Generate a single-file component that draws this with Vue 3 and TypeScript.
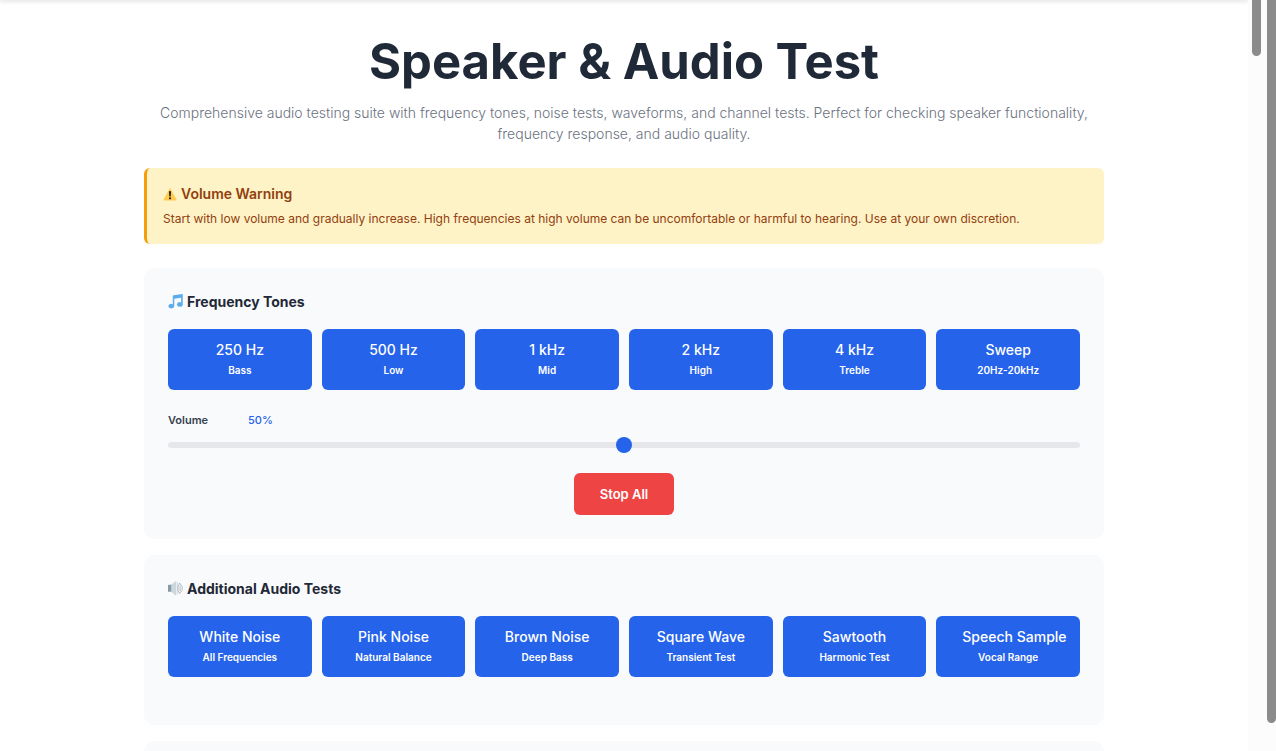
<script setup lang="ts">
import { ref } from 'vue'

interface AudioTest {
  name: string
  detail: string
}

const volume = ref(50)
const active = ref<string | null>(null)

const tones: AudioTest[] = [
  { name: '250 Hz', detail: 'Bass' },
  { name: '500 Hz', detail: 'Low' },
  { name: '1 kHz', detail: 'Mid' },
  { name: '2 kHz', detail: 'High' },
  { name: '4 kHz', detail: 'Treble' },
  { name: 'Sweep', detail: '20Hz-20kHz' },
]

const extras: AudioTest[] = [
  { name: 'White Noise', detail: 'All Frequencies' },
  { name: 'Pink Noise', detail: 'Natural Balance' },
  { name: 'Brown Noise', detail: 'Deep Bass' },
  { name: 'Square Wave', detail: 'Transient Test' },
  { name: 'Sawtooth', detail: 'Harmonic Test' },
  { name: 'Speech Sample', detail: 'Vocal Range' },
]
</script>

<template>
  <div class="shell">
    <div class="page">
      <header class="topbar"></header>
      <main class="content">
        <h1>Speaker &amp; Audio Test</h1>
        <p class="intro">
          Comprehensive audio testing suite with frequency tones, noise tests, waveforms, and channel tests. Perfect for checking speaker functionality, frequency response, and audio quality.
        </p>

        <section class="warning">
          <h2>
            <svg class="warn-icon" viewBox="0 0 26 26" aria-hidden="true">
              <path d="M13 2 L25 23 Q25 25 23 25 H3 Q1 25 1 23 Z" fill="#ffcc4d" />
              <path d="M11 8.500 Q13 6.500 15 8.500 L14.300 17.500 H11.700 Z" fill="#231f20" />
              <circle cx="13" cy="21" r="2" fill="#231f20" />
            </svg>
            <span>Volume Warning</span>
          </h2>
          <p>Start with low volume and gradually increase. High frequencies at high volume can be uncomfortable or harmful to hearing. Use at your own discretion.</p>
        </section>

        <section class="card">
          <h2>
            <svg class="icon" viewBox="0 0 36 36" aria-hidden="true">
              <path d="M34.200.100 L13.500 2.700 Q11.500 3 11.500 5 V24.300 A7 5.500 0 1 0 15 29 V11.300 L31.500 9.200 V20.300 A7 5.500 0 1 0 35.500 25 V1.500 Q35.500 0 34.200.100 Z" fill="#5dadec" />
            </svg>
            <span>Frequency Tones</span>
          </h2>
          <div class="grid">
            <button v-for="t in tones" :key="t.name" type="button" class="test" @click="active = t.name">
              <span class="name">{{ t.name }}</span>
              <span class="detail">{{ t.detail }}</span>
            </button>
          </div>
          <div class="volume">
            <div class="volume-head">
              <label for="volume">Volume</label>
              <output for="volume">{{ volume }}%</output>
            </div>
            <input id="volume" v-model.number="volume" type="range" min="0" max="100" />
          </div>
          <button type="button" class="stop" @click="active = null">Stop All</button>
        </section>

        <section class="card">
          <h2>
            <svg class="icon" viewBox="0 0 36 36" aria-hidden="true">
              <path d="M0 10 Q0 9 1 9 H9 V26 H1 Q0 26 0 25 Z" fill="#8899a6" />
              <path d="M8 9 L18 0.500 Q20 0 20 2 V33 Q20 35 18 34.500 L8 26 Z" fill="#ccd6dd" />
              <path d="M23 3 V32" stroke="#ccd6dd" stroke-width="2" fill="none" />
              <path d="M28 5 L34 13 V22 L28 30 L24 22 V13 Z M29 11 V24" stroke="#a3b1bb" stroke-width="2" fill="none" />
            </svg>
            <span>Additional Audio Tests</span>
          </h2>
          <div class="grid">
            <button v-for="t in extras" :key="t.name" type="button" class="test" @click="active = t.name">
              <span class="name">{{ t.name }}</span>
              <span class="detail">{{ t.detail }}</span>
            </button>
          </div>
        </section>

        <section class="card following"></section>
      </main>
    </div>
    <div class="rail inner" aria-hidden="true"><i></i></div>
    <div class="rail outer" aria-hidden="true"><i></i></div>
  </div>
</template>

<style>
body {
  margin: 0;
  background: #fff;
}
</style>

<style scoped>
* {
  box-sizing: border-box;
}

.shell {
  display: flex;
  height: 100vh;
  overflow: hidden;
  font-family: Inter, "Liberation Sans", sans-serif;
  color: #1f2937;
}

.page {
  flex: 1;
  min-width: 0;
  overflow: hidden;
}

.topbar {
  height: 0;
  box-shadow: 0 0 4px 1px rgba(0, 0, 0, 0.2);
}

.content {
  max-width: 1008px;
  margin: 0 auto;
  padding: 32px 24px 0;
}

h1 {
  margin: 0 0 10px;
  font-size: 49px;
  line-height: 60px;
  font-weight: 700;
  text-align: center;
}

.intro {
  margin: 0 0 24px;
  font-size: 14px;
  line-height: 21px;
  font-weight: 300;
  text-align: center;
  color: #6b7280;
}

h2 {
  display: flex;
  align-items: center;
  margin: 0;
  font-weight: 600;
}

.warning {
  height: 76px;
  margin-bottom: 24px;
  padding: 16px;
  border-left: 3px solid #f59e0b;
  border-radius: 6px;
  background: #fef3c7;
  color: #92400e;
}

.warning h2 {
  gap: 4px;
  margin-bottom: 7px;
  font-size: 14px;
  line-height: 19px;
}

.warning p {
  margin: 0;
  font-size: 12px;
  line-height: 18px;
}

.warn-icon {
  width: 14px;
  height: 14px;
}

.card {
  margin-bottom: 16px;
  padding: 24px;
  border-radius: 10px;
  background: #f9fafb;
}

.card h2 {
  gap: 4px;
  margin-bottom: 18px;
  font-size: 14px;
  line-height: 19px;
  font-weight: 700;
}

.icon {
  width: 15px;
  height: 15px;
}

.following {
  height: 170px;
}

.grid {
  display: grid;
  grid-template-columns: repeat(6, minmax(0, 1fr));
  gap: 10px;
  margin-bottom: 24px;
}

button {
  border: 0;
  border-radius: 6px;
  font-family: inherit;
  color: #fff;
  cursor: pointer;
}

.test {
  display: flex;
  flex-direction: column;
  align-items: stretch;
  padding: 10px 26px;
  background: #2563eb;
  white-space: nowrap;
}

.name {
  font-size: 14px;
  line-height: 21px;
  font-weight: 500;
}

.detail {
  font-size: 10px;
  line-height: 20px;
  font-weight: 600;
}

.volume-head {
  display: flex;
  font-size: 11px;
  line-height: 12px;
  font-weight: 600;
}

.volume-head label {
  width: 80px;
  color: #374151;
}

.volume-head output {
  color: #2563eb;
  font-weight: 500;
}

.volume {
  margin-bottom: 20px;
}

input[type='range'] {
  display: block;
  width: 100%;
  height: 16px;
  margin: 11px 0 0;
  appearance: none;
  background: transparent;
}

input[type='range']::-webkit-slider-runnable-track {
  height: 6px;
  border-radius: 3px;
  background: #e5e7eb;
}

input[type='range']::-webkit-slider-thumb {
  width: 16px;
  height: 16px;
  margin-top: -5px;
  appearance: none;
  border-radius: 50%;
  background: #2563eb;
}

.stop {
  display: block;
  height: 42px;
  margin: 0 auto;
  padding: 0 26px;
  background: #ef4444;
  font-size: 13px;
  font-weight: 600;
}

.rail {
  flex: none;
  background: #fcfcfc;
}

.rail i {
  display: block;
  width: 9px;
  background: #8b8b8b;
}

.inner {
  width: 16px;
  padding-left: 4px;
}

.inner i {
  height: 56px;
  border-radius: 0 0 5px 5px;
}

.outer {
  width: 12px;
  padding-left: 3px;
}

.outer i {
  height: 96.3%;
  border-radius: 0 0 5px 5px;
}
</style>
